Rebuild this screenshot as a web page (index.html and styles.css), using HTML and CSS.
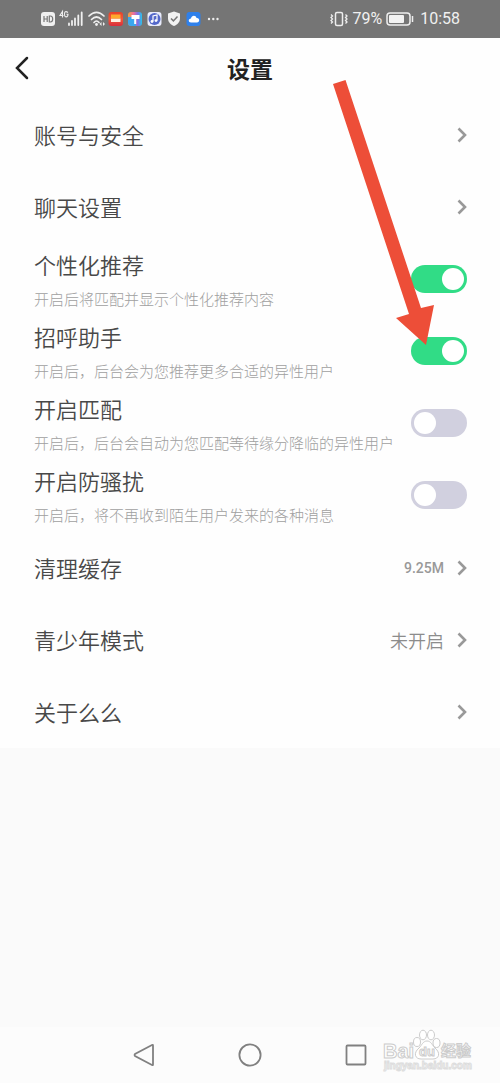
FILE: index.html
```html
<!DOCTYPE html>
<html lang="zh-CN">
<head>
<meta charset="utf-8">
<meta name="viewport" content="width=device-width, initial-scale=1">
<title>设置</title>
<link rel="stylesheet" href="styles.css">
</head>
<body>
<svg class="defs" aria-hidden="true">
  <symbol id="chevron" viewBox="0 0 10 16"><path d="M1.5 1.5 8 8 1.5 14.5" fill="none" stroke="currentColor" stroke-width="2.6"/></symbol>
</svg>
<div class="screen">
  <div class="status">
    <svg class="status-icons" viewBox="0 0 182 20" aria-hidden="true">
      <defs>
        <linearGradient id="sun" x1="0" y1="0" x2="0" y2="1"><stop offset="0" stop-color="#e8402a"/><stop offset=".5" stop-color="#f25a3a"/><stop offset="1" stop-color="#d92c3a"/></linearGradient>
        <linearGradient id="rainbow" x1="0" y1="0" x2="1" y2="0"><stop offset="0" stop-color="#f1a33b"/><stop offset=".4" stop-color="#ef6f9b"/><stop offset=".7" stop-color="#7a72e8"/><stop offset="1" stop-color="#29c5e8"/></linearGradient>
      </defs>
      <rect x="1" y="3" width="14" height="14" rx="3" fill="#f0f0f0"/>
      <path d="M4 7v6M7.200 7v6M4 10h3.200M9.300 7v6h1c3.200 0 3.200-6 0-6z" fill="none" stroke="#777" stroke-width="1.200"/>
      <path d="M22.500 8.500v-6L20 6.500h3.500M28 3.500c-3-2-3.500 0-3.500 1.800 0 3.700 3.500 3.200 3.500 0h-1.500" fill="none" stroke="#eee" stroke-width="1.100"/>
      <path d="M29 16v-1.500M32 16v-4M35 16V9.500M38.300 16V6.500M41.700 16V3.500" stroke="#f0f0f0" stroke-width="1.800" stroke-linecap="round"/>
      <path d="M49 7c5-5 10-5 15 0M51.500 10.500c3.500-3.500 6.500-3.500 10 0M54 13.500c2-2 3-2 5 0" fill="none" stroke="#f0f0f0" stroke-width="1.700" stroke-linecap="round"/>
      <circle cx="56.500" cy="15.500" r="1.400" fill="#f0f0f0"/>
      <path d="m59.500 15 2-2v4zM65 15l-2-2v4z" fill="#eee"/>
      <rect x="68.500" y="3" width="14.500" height="14" rx="3" fill="url(#sun)"/>
      <path d="M71 9.500h9.500V13H71z" fill="#fff2e2"/><path d="M71 5.500h9.500v4H71z" fill="#ffa92c"/>
      <rect x="88" y="3" width="14" height="14" rx="3" fill="url(#rainbow)"/>
      <path d="M88 8v6c0 2 1 3 3 3h5V8z" fill="#3aa7ee"/><path d="M91.500 6h8v4h-3.300v5h-2v-5h-2.700z" fill="#fff"/>
      <rect x="107.500" y="3" width="14" height="14" rx="3" fill="#e9ecfb"/><circle cx="114.500" cy="10" r="6" fill="#5468ca"/>
      <path d="M113 12.500V7l4-1v5.500" fill="none" stroke="#fff" stroke-width="1.200"/><circle cx="112" cy="12.500" r="1.400" fill="#fff"/><circle cx="116" cy="11.600" r="1.400" fill="#fff"/>
      <path d="m134 2.500 6 2v5c0 3.500-2.500 6-6 7.500-3.500-1.500-6-4-6-7.500v-5z" fill="#f2f2f2"/><path d="m131 9.500 2.400 2.400 4.100-4.400" fill="none" stroke="#777" stroke-width="1.500"/>
      <rect x="146.500" y="3" width="14" height="14" rx="3" fill="#2f80ea"/><path d="M151 13.500c-3 0-3-4 0-4 .5-3.500 5-3.500 5.500-.5 3.500-.5 3.500 4.500.5 4.500z" fill="#fff"/>
      <circle cx="169" cy="10" r="1.200" fill="#eee"/><circle cx="173.300" cy="10" r="1.200" fill="#eee"/><circle cx="177.500" cy="10" r="1.200" fill="#eee"/>
    </svg>
    <div class="status-right">
      <svg class="vibrate" viewBox="0 0 18 16" aria-hidden="true"><rect x="5.500" y="1.500" width="7" height="13" rx="1.500" fill="none" stroke="#eee" stroke-width="1.500"/><path d="m1 3.500 1.500 1.500L1 6.500 2.500 8 1 9.500 2.500 11 1 12.500M15.500 3.500 17 5l-1.500 1.500L17 8l-1.500 1.500L17 11l-1.500 1.500" fill="none" stroke="#eee" stroke-width="1.300"/></svg>
      <span>79%</span>
      <svg class="battery" viewBox="0 0 28 14" aria-hidden="true"><rect x="1" y="1" width="23" height="12" rx="3" fill="none" stroke="#eee" stroke-width="1.500"/><rect x="3" y="3" width="15" height="8" rx="1" fill="#f2f2f2"/><path d="M26.500 4v6" stroke="#eee" stroke-width="1.500"/></svg>
      <time class="clock">10:58</time>
    </div>
  </div>
  <header class="header">
    <button class="back" aria-label="返回"><svg viewBox="0 0 14 24" aria-hidden="true"><path d="M12 2 2 12l10 10" fill="none" stroke="#222" stroke-width="2.500" stroke-linecap="round"/></svg></button>
    <h1 class="title">设置</h1>
  </header>
  <main class="list">
    <button class="row"><span class="label">账号与安全</span><svg class="chevron"><use href="#chevron"/></svg></button>
    <button class="row"><span class="label">聊天设置</span><svg class="chevron"><use href="#chevron"/></svg></button>
    <label class="row" for="recommend"><span class="copy"><span class="name">个性化推荐</span><span class="hint">开启后将匹配并显示个性化推荐内容</span></span><input class="switch" id="recommend" type="checkbox" checked></label>
    <label class="row" for="greet"><span class="copy"><span class="name">招呼助手</span><span class="hint">开启后，后台会为您推荐更多合适的异性用户</span></span><input class="switch" id="greet" type="checkbox" checked></label>
    <label class="row" for="match"><span class="copy"><span class="name">开启匹配</span><span class="hint">开启后，后台会自动为您匹配等待缘分降临的异性用户</span></span><input class="switch" id="match" type="checkbox"></label>
    <label class="row" for="block"><span class="copy"><span class="name">开启防骚扰</span><span class="hint">开启后，将不再收到陌生用户发来的各种消息</span></span><input class="switch" id="block" type="checkbox"></label>
    <div class="more">
      <button class="row"><span class="label">清理缓存</span><span class="value size">9.25M</span><svg class="chevron"><use href="#chevron"/></svg></button>
      <button class="row"><span class="label">青少年模式</span><span class="value">未开启</span><svg class="chevron"><use href="#chevron"/></svg></button>
      <button class="row"><span class="label">关于么么</span><svg class="chevron"><use href="#chevron"/></svg></button>
    </div>
  </main>
  <nav class="navbar">
    <button class="nav" aria-label="返回"><svg viewBox="0 0 24 24" aria-hidden="true"><path d="M21 2.500v19q0 1-1 .500L3 13q-1-1 0-2L20 2q1-.500 1 .500z"/></svg></button>
    <button class="nav" aria-label="主屏幕"><svg viewBox="0 0 24 24" aria-hidden="true"><circle cx="12" cy="12" r="10.600"/></svg></button>
    <button class="nav" aria-label="最近任务"><svg viewBox="0 0 24 24" aria-hidden="true"><rect x="2.500" y="2.500" width="19" height="19" rx="1"/></svg></button>
  </nav>
  <svg class="arrow" viewBox="0 0 40 266" aria-hidden="true"><path d="M-22 5-9.500 1 66 229l13-3-8 40-30-27 13-4z"/></svg>
  <svg class="watermark" viewBox="0 0 92 44" aria-hidden="true">
    <text class="brand" x="0" y="30">Bai</text>
    <g><ellipse cx="34" cy="14" rx="3.500" ry="4.500"/><ellipse cx="40" cy="7" rx="3.500" ry="4.800"/><ellipse cx="48" cy="7" rx="3.500" ry="4.800"/><ellipse cx="53.500" cy="15" rx="3.500" ry="4.500"/><path d="M44 13c-4 0-5 4-8 7-6 5-4 11 2 11h12c6 0 8-6 2-11-3-3-4-7-8-7z"/></g>
    <text class="du" x="36" y="28">du</text><text class="brand-cn" x="58" y="28">经验</text>
    <text class="site" x="1" y="41">jingyan.baidu.com</text>
  </svg>
</div>
</body>
</html>
```
FILE: styles.css
```css
* { box-sizing: border-box; }
body {
  margin: 0;
  background: #fafafa;
  font-family: "Noto Sans CJK SC", sans-serif;
}
button {
  margin: 0;
  padding: 0;
  border: 0;
  background: none;
  font: inherit;
  color: inherit;
  text-align: left;
}
.defs { position: absolute; width: 0; height: 0; }
.screen {
  position: relative;
  display: flex;
  flex-direction: column;
  min-height: 100vh;
  overflow: hidden;
}
.status {
  display: flex;
  align-items: center;
  justify-content: space-between;
  height: 38px;
  padding: 0 40px;
  background: #757575;
  color: #f0f0f0;
  font: 16px/20px Roboto, sans-serif;
}
.status-icons { width: 182px; height: 20px; }
.status-right { display: flex; align-items: center; gap: 4px; }
.vibrate { width: 18px; height: 16px; }
.battery { width: 28px; height: 14px; }
.clock { margin-left: 2px; }
.header {
  display: grid;
  grid-template-columns: 1fr auto 1fr;
  align-items: center;
  height: 61px;
  padding: 0 15px 2px;
  background: #fefefe;
}
.back { justify-self: start; display: flex; }
.back svg { width: 14px; height: 24px; }
.title {
  margin: 0;
  font-size: 23px;
  line-height: 32px;
  font-weight: 700;
  color: #222;
}
.list { background: #fefefe; }
.more { padding-top: 1px; }
.row {
  display: flex;
  align-items: center;
  width: 100%;
  min-height: 72px;
  padding: 0 33px 0 34px;
}
.label, .name {
  font-size: 22px;
  line-height: 32px;
  font-weight: 350;
  color: #484848;
}
.label { flex: 1; padding-bottom: 2px; }
.copy { flex: 1; display: flex; flex-direction: column; gap: 8px; white-space: nowrap; }
.hint {
  font-size: 15px;
  line-height: 22px;
  font-weight: 300;
  color: #a0a0a0;
}
.chevron { width: 10px; height: 16px; color: #999; }
.value { margin-right: 13px; font-size: 18px; line-height: 24px; font-weight: 350; color: #8c8c8c; }
.size { font-family: Roboto, sans-serif; font-size: 14px; font-weight: 500; color: #999; }
.switch {
  appearance: none;
  display: flex;
  flex: none;
  width: 56px;
  height: 28px;
  margin: 0;
  padding: 3px;
  border-radius: 14px;
  background: #d1d0df;
}
.switch::before {
  content: "";
  width: 22px;
  height: 22px;
  border-radius: 50%;
  background: #fff;
}
.switch:checked { justify-content: flex-end; background: #31dc86; }
.navbar {
  display: flex;
  justify-content: center;
  gap: 82px;
  margin-top: auto;
  padding: 16px 0;
  background: #fcfcfc;
}
.nav { display: flex; }
.nav svg { width: 24px; height: 24px; fill: none; stroke: #808080; stroke-width: 1.8; }
.arrow {
  position: absolute;
  top: 79px;
  right: 105px;
  width: 40px;
  height: 266px;
  overflow: visible;
  fill: #ed4e38;
  pointer-events: none;
}
.watermark {
  position: absolute;
  right: 25px;
  bottom: 11px;
  width: 92px;
  height: 44px;
  overflow: visible;
  fill: #fff;
  stroke: #ccc;
  stroke-width: 1;
  font-family: "Liberation Sans", "Noto Sans CJK SC", sans-serif;
  font-weight: 700;
  pointer-events: none;
}
.brand { font-size: 20px; }
.brand-cn { font-size: 15px; }
.du { font-size: 13px; }
.site { font-size: 10px; stroke: #ddd; }
```
